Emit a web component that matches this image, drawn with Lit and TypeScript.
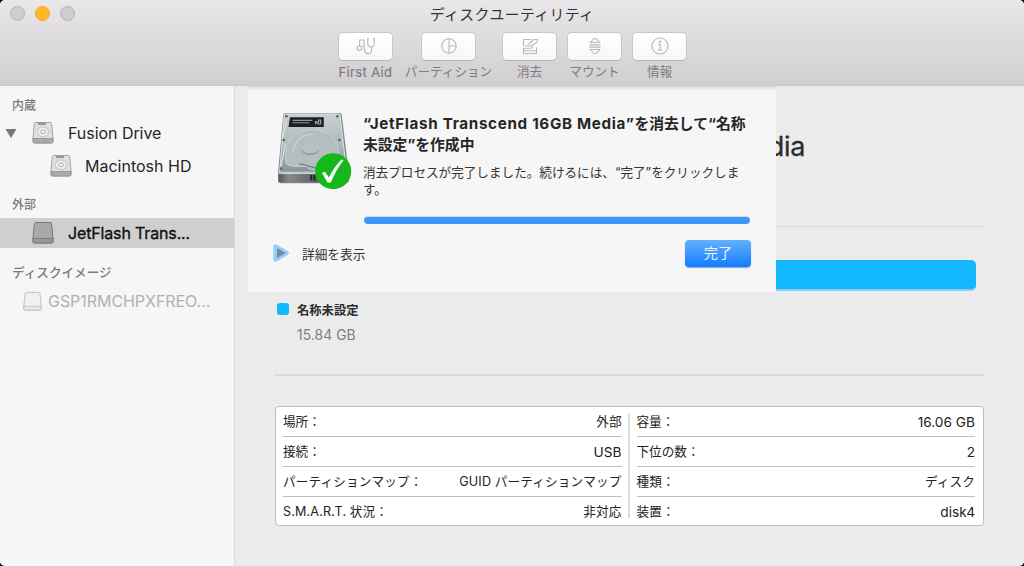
import { LitElement, html, css, svg, nothing } from "lit";
import { customElement } from "lit/decorators.js";

const tools = [
  { id: "aid", label: "First Aid", cls: "t-aid" },
  { id: "part", label: "パーティション", cls: "t-part" },
  { id: "erase", label: "消去", cls: "t-erase" },
  { id: "mount", label: "マウント", cls: "t-mount" },
  { id: "info", label: "情報", cls: "t-info" },
];

const toolIcons: Record<string, unknown> = {
  aid: svg`<path d="M8 3H3.600v6M8 3v5.500H6.500M8 8.500c0 2-.3 3 .5 5 .8 2.200 2 3.200 3.600 3.200 2 0 3.400-1.400 3.400-3.700V10"/><circle cx="3.400" cy="11.200" r="2.200"/><path d="M13 1.500h-1.300v4.300c0 2.600 1.300 4.200 3.300 4.200s3.300-1.600 3.300-4.200V1.500H17"/>`,
  part: svg`<circle cx="10" cy="9" r="7.200"/><path d="M10 1.800v14.400M10 9h7.200"/>`,
  erase: svg`<path d="M11.500 2.500h-8v6.500M3.500 11v5.500h13v-6M3.500 11.300h7.500l2-2M3.500 13.800h13M5.500 8.800h6.500l5.300-4V2.500h-3.300L8.500 7"/>`,
  mount: svg`<path d="M5.300 5.500 9 1.500h2l3.700 4zM5.300 12.500 9 16.500h2l3.700-4zM4.500 7.900h11M4.500 10.100h11"/>`,
  info: svg`<circle cx="10" cy="9" r="8"/><path d="M8 7.500h2.300v5.300M7.800 13h4.600"/><circle cx="10" cy="4.700" r=".7"/>`,
};

const driveIcon = (kind: "internal" | "external" | "image") => {
  const dark = kind === "external";
  return html`<svg class="drive" viewBox="0 0 22 24" width="22" height="24">
    <path d="M3.800 1.500h14.400q1.200 0 1.400 1.200L21 17v3.500q0 1.500-1.500 1.500h-17Q1 22 1 20.500V17L2.400 2.700q.2-1.200 1.400-1.200z"
      fill=${dark ? "#a9a9a9" : kind === "image" ? "#f0f0f0" : "#e0e0e0"}
      stroke=${dark ? "#777" : kind === "image" ? "#b9b9b9" : "#a2a2a2"} />
    <path d="M1 17.500h20v3q0 1.500-1.500 1.500h-17Q1 22 1 20.500z"
      fill=${dark ? "#999" : kind === "image" ? "#e8e8e8" : "#aaa"}
      stroke=${dark ? "#727272" : kind === "image" ? "#b9b9b9" : "#909090"} stroke-width=".8" />
    ${kind === "internal"
      ? svg`<path d="M6 3h8" stroke="#808080" stroke-width="1.500"/><rect x="5.500" y="6" width="11" height="9.500" rx="4" fill="#ececec" stroke="#c2c2c2"/><ellipse cx="11" cy="10.800" rx="2.300" ry="1.700" fill="#fff" stroke="#aaa"/>`
      : nothing}
  </svg>`;
};

@customElement("disk-toolbar")
class DiskToolbar extends LitElement {
  static styles = css`
    :host { display: block; flex: none; height: 86px; box-sizing: border-box; background: linear-gradient(#e9e7e9, #d0ced0); border-bottom: 1px solid #cbc9cb; }
    .titlebar { display: grid; grid-template-columns: 100px 1fr 100px; height: 29px; align-items: center; }
    .lights { display: flex; gap: 10px; padding: 0 0 2px 10px; }
    .light { width: 15px; height: 15px; box-sizing: border-box; border-radius: 50%; background: #cfcdcf; border: 1px solid #b4b2b4; }
    .light.min { background: #ffb924; border-color: #eea72c; }
    .title { font-size: 14.900px; letter-spacing: 0.300px; line-height: 28px; text-align: center; color: #333; }
    .tools { display: flex; padding: 3px 0 0 338px; }
    .tool { display: flex; flex-direction: column; align-items: center; width: 55px; }
    .t-part { margin-left: 28px; }
    .t-erase { margin-left: 26px; }
    .t-mount { margin-left: 10px; }
    .t-info { margin-left: 10px; }
    .button { display: flex; align-items: center; justify-content: center; width: 55px; height: 29px; box-sizing: border-box; border-radius: 5px; border: 1px solid #c9c7c9; border-bottom-color: #b5b3b5; background: linear-gradient(#fff, #f7f7f7); padding-bottom: 2px; }
    .button svg { fill: none; stroke: #b8b8b8; stroke-width: 1.100; }
    .label { font-size: 12.600px; line-height: 20px; margin-top: 1px; white-space: nowrap; color: #7e7c7e; }
    .t-aid .label { font-size: 13px; letter-spacing: 0.350px; -webkit-text-stroke: 0.200px; }
  `;
  render() {
    return html`
      <div class="titlebar">
        <div class="lights"><i class="light"></i><i class="light min"></i><i class="light"></i></div>
        <div class="title">ディスクユーティリティ</div>
      </div>
      <div class="tools">
        ${tools.map((t) => html`<div class="tool ${t.cls}">
          <div class="button"><svg width="20" height="18" viewBox="0 0 20 18">${toolIcons[t.id]}</svg></div>
          <div class="label">${t.label}</div>
        </div>`)}
      </div>`;
  }
}

@customElement("disk-sidebar")
class DiskSidebar extends LitElement {
  static styles = css`
    :host { display: block; flex: none; width: 235px; box-sizing: border-box; background: #f6f6f6; border-right: 1px solid #dadada; padding-top: 10px; }
    .head { height: 20px; line-height: 20px; padding-left: 12px; font-size: 12px; font-weight: 500; color: #7b7b7b; }
    .head.ext { margin-top: 14px; }
    .head.img { margin-top: 15px; font-size: 12.600px; }
    .row { display: flex; align-items: center; height: 30px; font-size: 16px; color: #262626; white-space: nowrap; }
    .drive { flex: none; display: block; }
    .fusion { padding-left: 5px; margin-top: 2px; }
    .fusion .arrow { width: 12px; margin-right: 15px; }
    .fusion .name { margin-left: 14px; letter-spacing: -0.050px; }
    .mac { padding-left: 50px; margin-top: 3px; }
    .mac .name { margin-left: 13px; letter-spacing: 0; }
    .jet { padding-left: 32px; margin-top: 3px; background: #cfcfcf; color: #111; }
    .jet .name { margin-left: 14px; letter-spacing: -0.150px; -webkit-text-stroke: 0.350px; }
    .gsp { padding-left: 23px; color: #b1b1b1; margin-top: 3px; }
    .gsp .drive { width: 19px; height: 23px; }
    .gsp .name { margin-left: 6px; font-size: 16px; letter-spacing: -0.050px; }
  `;
  render() {
    return html`
      <div class="head">内蔵</div>
      <div class="row fusion">
        <svg class="arrow" width="12" height="11" viewBox="0 0 12 11"><path d="M.5 1h11L6 10z" fill="#777"/></svg>
        ${driveIcon("internal")}<span class="name">Fusion Drive</span>
      </div>
      <div class="row mac">${driveIcon("internal")}<span class="name">Macintosh HD</span></div>
      <div class="head ext">外部</div>
      <div class="row jet">${driveIcon("external")}<span class="name">JetFlash Trans...</span></div>
      <div class="head img">ディスクイメージ</div>
      <div class="row gsp">${driveIcon("image")}<span class="name">GSP1RMCHPXFREO...</span></div>`;
  }
}

const leftInfo = [
  ["場所：", "外部"],
  ["接続：", "USB"],
  ["パーティションマップ：", "GUID パーティションマップ"],
  ["S.M.A.R.T. 状況：", "非対応"],
];
const rightInfo = [
  ["容量：", "16.06 GB"],
  ["下位の数：", "2"],
  ["種類：", "ディスク"],
  ["装置：", "disk4"],
];

@customElement("disk-details")
class DiskDetails extends LitElement {
  static styles = css`
    :host { display: block; flex: 1; padding: 0 40px; background: #ebebeb; }
    .name { height: 140px; box-sizing: border-box; padding-top: 43px; width: 530px; text-align: right; font-size: 27px; line-height: 36px; letter-spacing: -0.300px; color: #2c2c2c; -webkit-text-stroke: 0.300px; white-space: nowrap; }
    .rule { height: 1px; background: #d8d8d8; }
    .bar { margin: 33px 8px 0 2px; height: 31px; box-sizing: border-box; border-radius: 5px; background: #14b8ff; border-bottom: 2px solid #8cc9f5; }
    .legend { display: flex; margin-top: 10px; padding-left: 2px; height: 73px; }
    .swatch { width: 12px; height: 12px; margin: 2px 8px 0 0; border-radius: 3px; background: #14b8ff; }
    .vol { font-size: 12.300px; line-height: 20px; font-weight: 700; color: #2c2c2c; }
    .size { font-size: 13.800px; line-height: 20px; margin-top: 4px; letter-spacing: 0.100px; color: #7d7d7d; }
    .rule.low { height: 2px; background: #d7d7d7; }
    .panel { display: flex; margin-top: 30px; height: 120px; box-sizing: border-box; background: #fff; border: 1px solid #bdbdbd; border-radius: 4px; padding: 0 8px 0 7px; }
    .col { flex: 1; }
    .split { width: 2px; margin: 6px 7px 7px 6px; background: #dedede; }
    .item { display: flex; justify-content: space-between; height: 30px; box-sizing: border-box; border-bottom: 1px solid #bfbfbf; line-height: 30px; font-size: 12.600px; color: #222; white-space: nowrap; }
    .item:last-child { border-bottom: 0; }
    .item:nth-child(4) { letter-spacing: 0.150px; }
    .item:nth-child(3) { letter-spacing: 0.150px; }
    .item .latin { font-size: 13.700px; letter-spacing: 0; }
  `;
  private column(rows: string[][]) {
    return html`<div class="col">${rows.map(([k, v]) => html`<div class="item"><span>${k}</span><span class="v ${/^[\x20-\x7e]+$/.test(v) ? "latin" : ""}">${v}</span></div>`)}</div>`;
  }
  render() {
    return html`
      <div class="name">dia</div>
      <div class="rule"></div>
      <div class="bar"></div>
      <div class="legend"><i class="swatch"></i>
        <div><div class="vol">名称未設定</div><div class="size">15.84 GB</div></div>
      </div>
      <div class="rule low"></div>
      <div class="panel">${this.column(leftInfo)}<div class="split"></div>${this.column(rightInfo)}</div>`;
  }
}

@customElement("erase-sheet")
class EraseSheet extends LitElement {
  static styles = css`
    :host { display: block; position: absolute; left: 248px; top: 86px; width: 528px; height: 206px; box-sizing: border-box; background: linear-gradient(#d9d8d9, #f6f6f6 5px); padding: 24px 26px 0 24px; }
    .top { display: flex; height: 120px; }
    .art { flex: none; width: 91px; }
    .art svg { display: block; }
    .text { flex: 1; }
    .heading { padding-top: 3px; font-size: 14.800px; line-height: 21px; font-weight: 700; color: #262626; white-space: nowrap; }
    .latin { font-size: 15.200px; letter-spacing: 0.680px; }
    .body { margin-top: 8px; font-size: 12.600px; line-height: 17px; color: #333; white-space: nowrap; }
    .progress { margin: 18px 0 0 1px; height: 8px; box-sizing: border-box; border-top: 1px solid #cddcf0; border-radius: 4px; background: #3d96fb; }
    .foot { display: flex; align-items: center; margin-top: 6px; height: 34px; }
    .more { margin-left: 12px; font-size: 12.700px; flex: 1; color: #333; }
    .done { width: 66px; height: 27px; margin-right: -1px; border-radius: 4px; line-height: 26px; text-align: center; color: #e8f3ff; font-size: 14.200px; background: linear-gradient(#62b0fb, #3d97fc 50%, #127cff); box-shadow: 0 1px 1px rgba(20, 90, 190, 0.5); }
  `;
  render() {
    return html`
      <div class="top">
        <div class="art">
          <svg width="82" height="84" viewBox="0 0 82 84">
            <defs>
              <linearGradient id="m" x1="0" y1="0" x2="0" y2="1"><stop offset="0" stop-color="#c8d0d2"/><stop offset=".55" stop-color="#aeb7ba"/><stop offset="1" stop-color="#899195"/></linearGradient>
              <linearGradient id="b" x1="0" y1="0" x2="1" y2="0"><stop offset="0" stop-color="#555a5d"/><stop offset=".15" stop-color="#85898c"/><stop offset=".5" stop-color="#606568"/><stop offset="1" stop-color="#4a4d50"/></linearGradient>
            </defs>
            <g transform="translate(-.2 1.200) scale(1.040 .925)">
              <path d="M13 2h52q2 0 2.300 2L74 66v9q0 3-3 3H9q-3 0-3-3v-9L11 4q.3-2 2-2z" fill="#858c90"/>
              <path d="M14 3h49.500q2 0 2.200 2L72 66H7.500L12 5q.3-2 2-2z" fill="url(#m)" stroke="#dbe2e4"/>
              <path d="M10 30l4-18M9 60l4-25" stroke="#e0e6e8" stroke-width="1"/>
              <path d="M14 57C10 32 22 20 39 20c18 0 27 13 25 30-1 13-13 15-27 11C27 57 22 63 14 57z" fill="#b4bdc0" stroke="#c4cccf" stroke-width="1"/>
              <path d="M20 45c2-13 9-20 20-20M35 62c16 5 25-2 26-14" fill="none" stroke="#ccd4d7" stroke-width="1.200"/>
              <ellipse cx="37" cy="41.500" rx="8.500" ry="6" fill="#939ca0"/><ellipse cx="37" cy="39.500" rx="8.500" ry="6" fill="#b8c0c2"/>
              <path d="M26 57c9 1 13 5 21 5" fill="none" stroke="#747d81" stroke-width="1.500"/>
              <path d="M17.500 6.500h32.500V17h-34z" fill="#1d2124"/>
              <path d="M20 10h19M20 12.500h16" stroke="#8f979a" stroke-width="1.300"/><path d="M42 14v-3h1.500v3M45 14V9.500h2V14z" fill="none" stroke="#aab0b3"/>
              <path d="M6.500 66.500h66V75q0 2-2 2h-62q-2 0-2-2z" fill="url(#b)"/><path d="M6.500 67h66" stroke="#edf1f2"/>
              <path d="M38 69v6M41 69v6" stroke="#222" stroke-width="1.800"/>
              <g fill="#596165"><circle cx="14" cy="5.500" r="1.300"/><circle cx="63" cy="5.500" r="1.300"/><circle cx="11.500" cy="31" r="1.300"/><circle cx="65" cy="31" r="1.300"/><circle cx="9" cy="62" r="1.300"/></g>
            </g>
            <circle cx="61.200" cy="61.200" r="18" fill="#14b81b"/>
            <path d="M50 63q2-1.200 3.300-.8l3.600 5.300Q62 57 69.500 49.500l2 .8Q64 60 58.800 72.500h-3.300z" fill="#fff"/>
          </svg>
        </div>
        <div class="text">
          <div class="heading"><div><span class="latin">“JetFlash Transcend 16GB Media”</span>を消去して“名称</div><div>未設定”を作成中</div></div>
          <div class="body">消去プロセスが完了しました。続けるには、“完了”をクリックしま<br>す。</div>
          <div class="progress"></div>
        </div>
      </div>
      <div class="foot">
        <svg width="18" height="20" viewBox="0 0 18 20"><path d="M3.500 3.500v13L14.500 10z" fill="#77b8ef" stroke="#9accf7" stroke-width="4.500" stroke-linejoin="round"/><path d="M5 5v10l8.500-5z" fill="#6c8da9"/></svg>
        <div class="more">詳細を表示</div>
        <div class="done">完了</div>
      </div>`;
  }
}

@customElement("app-root")
class AppRoot extends LitElement {
  static styles = css`
    :host { display: block; width: 1024px; height: 566px; background: #000; font-family: Inter, "Noto Sans CJK JP", sans-serif; }
    .window { position: relative; display: flex; flex-direction: column; height: 566px; overflow: hidden; border-radius: 5px; background: #ebebeb; }
    .content { display: flex; flex: 1; }
  `;
  render() {
    return html`<div class="window" lang="ja">
      <disk-toolbar></disk-toolbar>
      <div class="content"><disk-sidebar></disk-sidebar><disk-details></disk-details></div>
      <erase-sheet></erase-sheet>
    </div>`;
  }
}
